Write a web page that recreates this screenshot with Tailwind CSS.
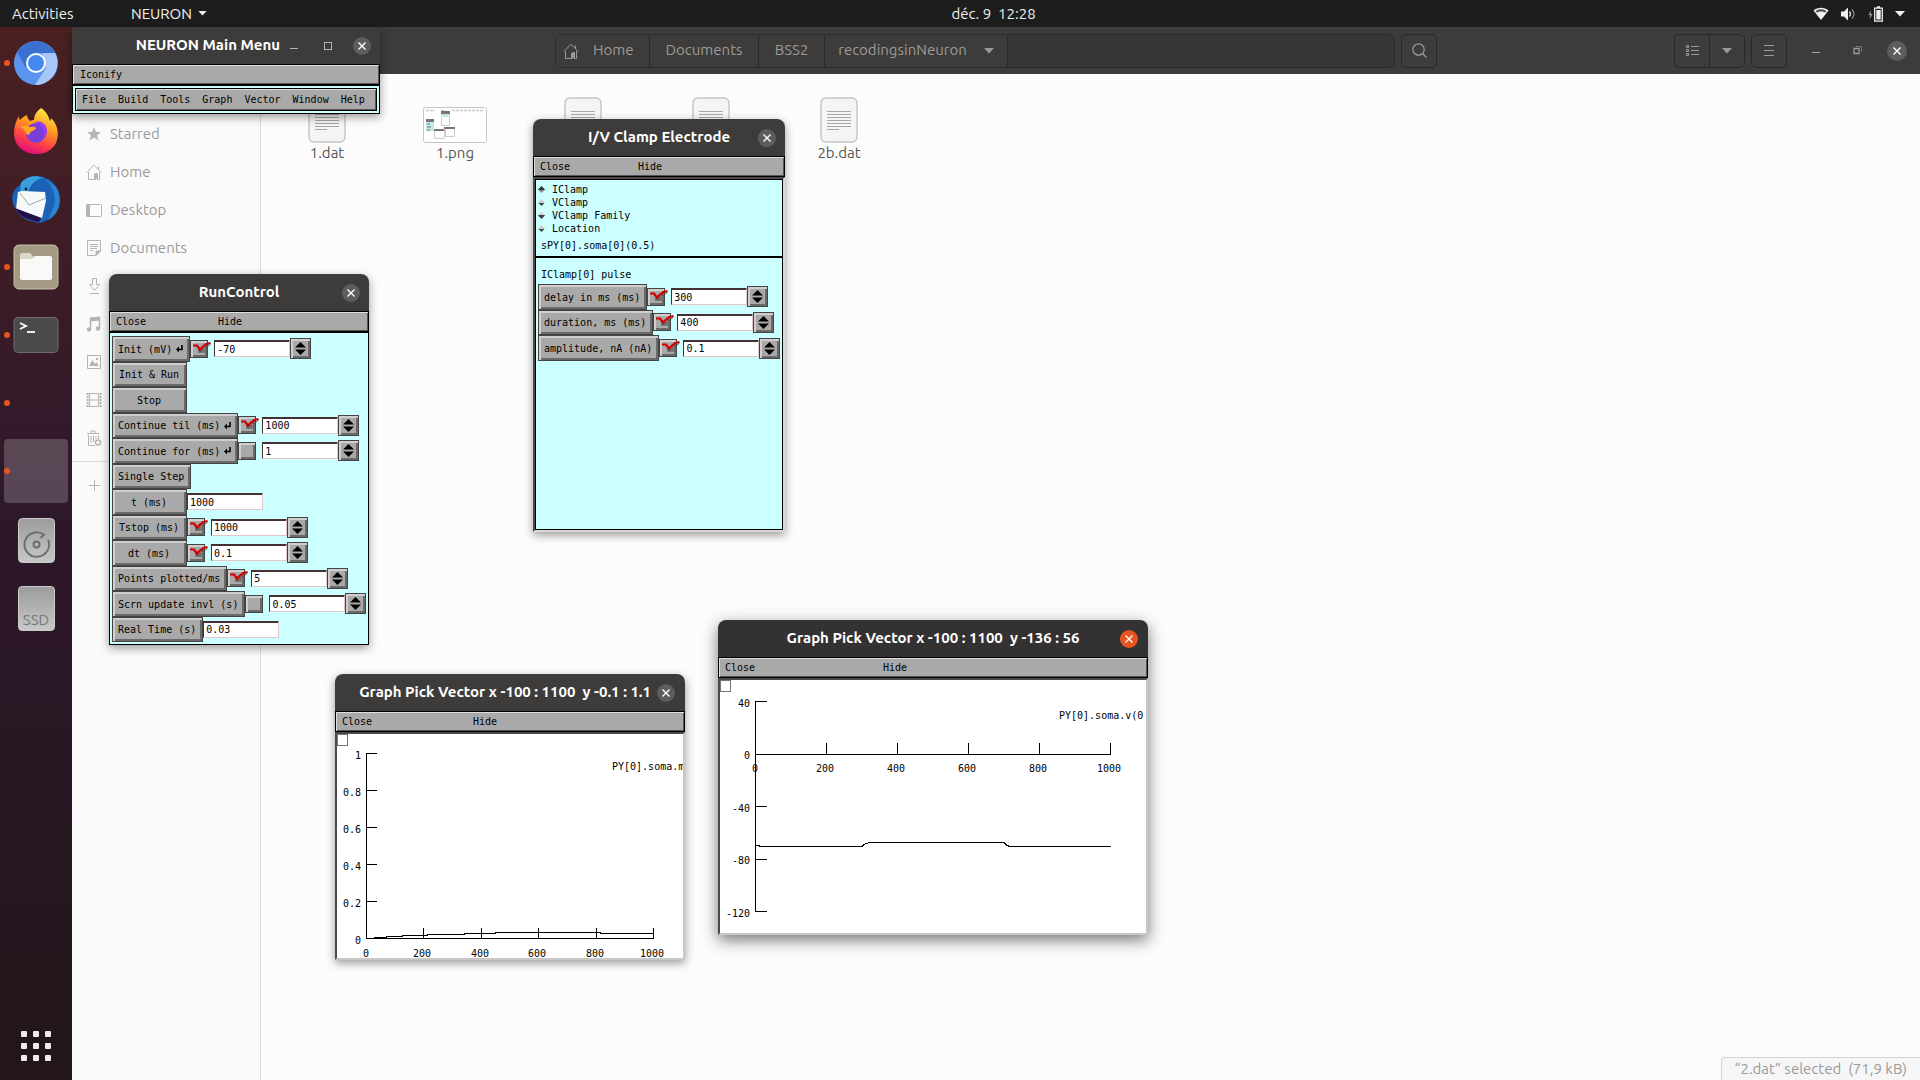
<!DOCTYPE html>
<html lang="fr">
<head>
<meta charset="utf-8">
<title>NEURON</title>
<script src="https://cdn.jsdelivr.net/npm/@tailwindcss/browser@4"></script>
</head>
<body class="relative flex h-screen min-h-[1000px] flex-col overflow-hidden bg-[#fcfcfc] font-['Ubuntu','Noto_Sans',sans-serif] text-[15px] text-[#9a9a9a]">

<svg class="hidden" aria-hidden="true">
  <symbol id="x" viewBox="0 0 10 10"><path d="M1.5 1.5l7 7M8.5 1.5l-7 7" stroke="currentColor" stroke-width="1.4" fill="none"/></symbol>
  <symbol id="tri" viewBox="0 0 10 6"><path d="M0 0h10L5 5.5z" fill="currentColor"/></symbol>
  <symbol id="house" viewBox="0 0 16 16"><path d="M.8 8.5L8 1.2l7.2 7.3M12.5 5.500V2.500M2.500 8v7.500h7V9.500h2v6h2V8" stroke="currentColor" fill="none"/><path d="M8 10h3v5H8z" fill="currentColor"/></symbol>
  <symbol id="doc" viewBox="0 0 38 46"><rect x="1" y="1" width="36" height="44" rx="5" fill="#f5f5f5" stroke="#c4c4c4" stroke-width="1.400"/><path d="M7 14.500h24M7 17.500h24M7 20.500h24M7 23.500h24M7 26.500h24M7 29.500h24M7 32.500h12" stroke="#a6a6a6"/></symbol>
  <symbol id="tick" viewBox="0 0 18 14"><path d="M5 8h7v4H5z" fill="#777"/><path d="M5 6.500l2.500 4.500 4-4.500h2l4-3.500" stroke="#555" stroke-width="1" fill="none"/><path d="M0 4.500h4L7 8.500l3-3L13.500 3l4-1" stroke="#d00000" stroke-width="2.200" fill="none"/></symbol>
  <symbol id="ret" viewBox="0 0 7 8"><path d="M6 0v4.500H2" stroke="#000" stroke-width="1.600" fill="none"/><path d="M0 4.500l3-3v6z" fill="#000"/></symbol>
  <symbol id="updown" viewBox="0 0 11 13"><path d="M5.500 0L11 5.500H0zM5.500 13L0 7.500h11z" fill="#000"/></symbol>
</svg>

<!-- Top panel -->
<header class="flex h-[27px] shrink-0 items-center bg-[#1d1d1d] pl-3 pr-[15px] text-[#f0f0f0]">
  <div class="flex flex-1 items-center">
    <button class="w-[119px] text-left leading-5">Activities</button>
    <button class="flex items-center gap-[6px] leading-5">NEURON <svg class="h-[5px] w-[9px]"><use href="#tri"/></svg></button>
  </div>
  <button class="pl-[70px] leading-5 whitespace-pre">déc. 9  12:28</button>
  <div class="flex flex-1 items-center justify-end gap-3">
    <svg class="h-[14px] w-[16px]" viewBox="0 0 16 14"><path d="M.5 3.500C4.500-.2 11.500-.2 15.500 3.500L8 13z" fill="#f0f0f0"/><path d="M2.500 4.200C5.500 1.600 10.500 1.600 13.500 4.200L12 5.600C9.500 4 6.500 4 4 5.600z" fill="#555"/></svg>
    <svg class="h-[14px] w-[15px]" viewBox="0 0 15 14"><path d="M0 4.500h3L7 .5v13L3 9.500H0z" fill="#f0f0f0"/><path d="M8.500 4.500q2 2.500 0 5" stroke="#ddd" stroke-width="1.300" fill="none"/><path d="M11 2.500q4 4.500 0 9" stroke="#888" stroke-width="1.300" fill="none"/></svg>
    <svg class="h-[16px] w-[15px]" viewBox="0 0 15 16"><path d="M3 4.500L.5 9h1.700l-.5 4L4.500 8H2.800z" fill="#999"/><path d="M6.700 2.200h7.600v13H6.700zM9 1h3" stroke="#f0f0f0" stroke-width="1.300" fill="none"/><path d="M8.300 4h4.400v9.500H8.300z" fill="#f0f0f0"/></svg>
    <svg class="h-[6px] w-[10px]"><use href="#tri"/></svg>
  </div>
</header>

<div class="flex min-h-0 flex-1">
  <!-- Dock -->
  <nav aria-label="Dock" class="flex w-[72px] shrink-0 flex-col justify-between bg-linear-to-b from-[#4b2021] via-[#2e182b] via-45% to-[#22161a] pb-[19px] pt-[2px]">
    <ul>
      <li class="relative flex h-[68px] items-center justify-center"><i class="absolute left-1 size-[6px] rounded-full bg-[#e95420]"></i>
        <svg class="size-[44px]" viewBox="0 0 44 44"><circle cx="22" cy="22" r="22" fill="#5b94ef"/><path d="M3 11A22 22 0 0 1 41 12H22L12 27z" fill="#3b6fd0"/><path d="M41 12A22 22 0 0 1 21 44l11-17-4-15z" fill="#a9c6f8"/><circle cx="22" cy="22" r="10" fill="#fff"/><circle cx="22" cy="22" r="8" fill="#4688f1"/></svg></li>
      <li class="relative flex h-[68px] items-center justify-center">
        <svg class="size-[46px]" viewBox="0 0 46 46"><defs><linearGradient id="ff" x1=".75" y1="0" x2=".35" y2="1"><stop offset="0" stop-color="#fff14a"/><stop offset=".4" stop-color="#ff9a20"/><stop offset=".72" stop-color="#ff3f46"/><stop offset="1" stop-color="#dc0b80"/></linearGradient></defs><path d="M28 0c7 5 8 10 9 13 1-1 1-2 1-3 8 8 8 18 5 25-4 8-12 11-20 11C10 46 1 37 1 25c0-7 2-12 5-17 0 2 0 3 1 4 2-2 4-4 7-5 0 2 1 4 3 6 2-1 3-1 4-1 0-5 3-9 7-12z" fill="url(#ff)"/><circle cx="23" cy="25" r="10" fill="#7a3fdb"/><path d="M22 14c7-2 12 3 12 9 0 4-2 7-4 8 3-8-1-14-8-17z" fill="#9a3cf5"/><path d="M7 19c4-2 7-1 10 0 3 0 5-1 6 1 0 2-5 3-6 5-1 3-3 2-4 0-1-3-3-5-6-6z" fill="#ffa51f"/></svg></li>
      <li class="relative flex h-[68px] items-center justify-center">
        <svg class="size-[48px]" viewBox="0 0 48 48"><path d="M24 1c14 0 24 11 24 23 0 10-7 17-10 20l-9 4C12 47 2 38 0 24c0-6 4-12 8-14 4-6 9-9 16-9z" fill="#1c62b7"/><path d="M9 8C13 2 24-1 31 3c-7 1-12 6-14 12-2 3-5 5-7 6l-2-4z" fill="#3a9fe0"/><path d="M33 5c9 6 11 17 9 26l-6 14c11-6 13-16 11-26-2-8-8-12-14-14z" fill="#2a85d2"/><path d="M10 16l23 1 1 9-4 17L4 34l2-17z" fill="#f7f8fa"/><path d="M8 18l9 12 17-7" stroke="#9aa" fill="none"/><path d="M3 33l26 10-2 4C15 45 7 41 3 33z" fill="#231048"/><circle cx="14" cy="14" r="1.400" fill="#123"/></svg></li>
      <li class="relative flex h-[68px] items-center justify-center"><i class="absolute left-1 size-[6px] rounded-full bg-[#e95420]"></i>
        <svg class="size-[46px]" viewBox="0 0 46 46"><rect x="1" y="1" width="44" height="44" rx="5" fill="#a29a82" stroke="#c7c1ad"/><path d="M7 11q0-2 2-2h8l4 4h16q2 0 2 2v3H7z" fill="#dcd8c9"/><path d="M7 15h12l3-3h15q2 0 2 2v20q0 2-2 2H9q-2 0-2-2z" fill="#faf9f7"/></svg></li>
      <li class="relative flex h-[68px] items-center justify-center"><i class="absolute left-1 size-[6px] rounded-full bg-[#e95420]"></i>
        <svg class="h-[36px] w-[46px]" viewBox="0 0 46 36"><rect x="1" y=".5" width="44" height="35" rx="4" fill="#4a4a4a" stroke="#6c6c6c"/><path d="M7 6l6 3-6 3" stroke="#fff" stroke-width="1.800" fill="none"/><path d="M14 15h8" stroke="#fff" stroke-width="1.800"/></svg></li>
      <li class="relative flex h-[68px] items-center"><i class="absolute left-1 size-[6px] rounded-full bg-[#e95420]"></i></li>
      <li class="relative flex h-[68px] items-center justify-center"><i class="absolute left-1 size-[6px] rounded-full bg-[#e95420]"></i><span class="size-16 rounded bg-white/20"></span></li>
      <li class="flex h-[68px] items-center justify-center pt-[2px]">
        <svg class="h-[45px] w-[37px]" viewBox="0 0 37 45"><defs><linearGradient id="dk" x2="0" y2="1"><stop offset="0" stop-color="#9c9c9c"/><stop offset="1" stop-color="#c8c8c8"/></linearGradient></defs><rect x=".5" y=".5" width="36" height="44" rx="4" fill="url(#dk)" stroke="#ccc"/><path d="M27 18.500a12 12 0 1 0 2.500 3l-4-.5 2.500-2.500" stroke="none" fill="none"/><path d="M30 21.500A12.300 12.300 0 1 1 26 16.600L22.500 20" stroke="#6e6e6e" stroke-width="2" fill="none"/><circle cx="18.500" cy="26.500" r="3" stroke="#6e6e6e" stroke-width="2" fill="none"/></svg></li>
      <li class="flex h-[68px] items-center justify-center pt-[2px]"><span class="flex h-[45px] w-[37px] items-end justify-center rounded border border-[#ccc] bg-linear-to-b from-[#9c9c9c] to-[#c8c8c8] text-[15px] leading-5 text-[#777]">SSD</span></li>
    </ul>
    <button aria-label="Show applications" class="mx-auto grid w-[30px] grid-cols-3 gap-[6px]">
      <i class="size-[6px] rounded-[1px] bg-[#f0eeec]"></i><i class="size-[6px] rounded-[1px] bg-[#f0eeec]"></i><i class="size-[6px] rounded-[1px] bg-[#f0eeec]"></i>
      <i class="size-[6px] rounded-[1px] bg-[#f0eeec]"></i><i class="size-[6px] rounded-[1px] bg-[#f0eeec]"></i><i class="size-[6px] rounded-[1px] bg-[#f0eeec]"></i>
      <i class="size-[6px] rounded-[1px] bg-[#f0eeec]"></i><i class="size-[6px] rounded-[1px] bg-[#f0eeec]"></i><i class="size-[6px] rounded-[1px] bg-[#f0eeec]"></i>
    </button>
  </nav>

  <!-- File manager -->
  <section class="flex min-w-0 flex-1 flex-col">
    <div class="flex h-[47px] shrink-0 items-center bg-[#3e3c3a] pl-[483px] pr-[13px] text-[#9c9a98]">
      <div class="flex h-[34px] w-[840px] items-stretch rounded-[5px] border border-[#2e2c2b] bg-[#393735]">
        <button class="flex w-[94px] items-center gap-[14px] border-r border-[#2a2827] bg-[#3e3c3a] pl-[7px]"><svg class="size-4"><use href="#house"/></svg>Home</button>
        <button class="w-[109px] border-r border-[#2a2827] bg-[#3e3c3a]">Documents</button>
        <button class="w-[66px] border-r border-[#2a2827] bg-[#3e3c3a]">BSS2</button>
        <button class="flex w-[183px] items-center justify-center gap-[17px] border-r border-[#2a2827] bg-[#3e3c3a]">recodingsinNeuron <svg class="h-[6px] w-[10px]"><use href="#tri"/></svg></button>
      </div>
      <button aria-label="Search" class="ml-[6px] flex h-[34px] w-[36px] items-center justify-center rounded-[5px] border border-[#2a2827]"><svg class="size-[15px]" viewBox="0 0 15 15" fill="none" stroke="currentColor" stroke-width="1.200"><circle cx="6.500" cy="6.500" r="5.700"/><path d="M10.500 10.500l4 4"/></svg></button>
      <div class="flex-1"></div>
      <div class="flex h-[34px] w-[71px] rounded-[5px] border border-[#2a2827]">
        <button aria-label="List view" class="flex flex-1 items-center justify-center border-r border-[#2a2827]"><svg class="h-[12px] w-[13px]" viewBox="0 0 13 12" fill="none" stroke="currentColor"><path d="M5 1.500h8M5 5.500h8M5 9.500h8M.5.5h2v2h-2zM.5 4.500h2v2h-2zM.5 8.500h2v2h-2z"/></svg></button>
        <button aria-label="View options" class="flex flex-1 items-center justify-center"><svg class="h-[6px] w-[10px]"><use href="#tri"/></svg></button>
      </div>
      <button aria-label="Menu" class="ml-[6px] flex h-[34px] w-[36px] items-center justify-center rounded-[5px] border border-[#2a2827]"><svg class="h-[11px] w-[10px]" viewBox="0 0 10 11" stroke="currentColor"><path d="M0 .5h10M0 5.500h10M0 10.500h10"/></svg></button>
      <button aria-label="Minimize" class="ml-[25px] flex h-5 w-[10px] items-center pt-1"><i class="h-px w-2 bg-[#a8a6a4]"></i></button>
      <button aria-label="Restore" class="ml-[30px] flex w-[10px] justify-center"><svg class="size-[9px]" viewBox="0 0 9 9" fill="none" stroke="currentColor"><path d="M1 2.500h5v5H1z" stroke-width="1.300"/><path d="M3 .5h5.500V6" opacity=".6"/></svg></button>
      <button aria-label="Close" class="ml-[25px] flex size-5 items-center justify-center rounded-full bg-[#5f5d5c] text-white"><svg class="size-[10px]"><use href="#x"/></svg></button>
    </div>
    <div class="flex min-h-0 flex-1">
      <aside class="w-[189px] shrink-0 border-r border-[#dcdcdc] bg-[#fafafa] pt-[41px]">
        <ul>
          <li><a href="#" class="flex h-[38px] items-center gap-2 pl-[14px]"><svg class="size-4" viewBox="0 0 16 16"><path d="M8 1l2 5h5l-4 3.400 1.500 5L8 11.500l-4.500 2.900 1.500-5L1 6h5z" fill="#b4b4b4"/></svg>Starred</a></li>
          <li><a href="#" class="flex h-[38px] items-center gap-2 pl-[14px]"><svg class="size-4 text-[#b4b4b4]"><use href="#house"/></svg>Home</a></li>
          <li><a href="#" class="flex h-[38px] items-center gap-2 pl-[14px]"><svg class="size-4" viewBox="0 0 16 16"><rect x=".5" y="2.500" width="15" height="12" rx="1" fill="none" stroke="#b4b4b4"/><path d="M0 2.500h4v12H0z" fill="#b4b4b4"/></svg>Desktop</a></li>
          <li><a href="#" class="flex h-[38px] items-center gap-2 pl-[14px]"><svg class="size-4" viewBox="0 0 16 16" fill="none" stroke="#b4b4b4"><path d="M1.500.5h13V11L10 15.500H1.500zM4 4.500h8M4 6.500h8M4 8.500h7M4 10.500h3"/><path d="M10 15.500V11h4.500z" fill="#b4b4b4"/></svg>Documents</a></li>
          <li><a href="#" aria-label="Downloads" class="flex h-[38px] items-center pl-[14px]"><svg class="size-4" viewBox="0 0 16 16" fill="none" stroke="#b4b4b4"><path d="M6.500.5h4v6h3l-5 6-5-6h3zM4 15.500h9"/></svg></a></li>
          <li><a href="#" aria-label="Music" class="flex h-[38px] items-center pl-[14px]"><svg class="size-4" viewBox="0 0 16 16"><path d="M4.500 13V2.500l9-1V12" stroke="#b4b4b4" stroke-width="1.500" fill="none"/><path d="M4 1.500l10-1v4l-10 1z" fill="#b4b4b4"/><circle cx="3" cy="13.500" r="2.200" fill="#b4b4b4"/><circle cx="12" cy="12.500" r="2.200" fill="#b4b4b4"/></svg></a></li>
          <li><a href="#" aria-label="Pictures" class="flex h-[38px] items-center pl-[14px]"><svg class="size-4" viewBox="0 0 16 16"><path d="M1.500 1.500h13v13h-13z" stroke="#b4b4b4" fill="none"/><path d="M3 12l3.500-6L9 10l1.500-2 2.500 4z" fill="#b4b4b4"/><circle cx="11" cy="5" r="1.300" fill="#b4b4b4"/></svg></a></li>
          <li><a href="#" aria-label="Videos" class="flex h-[38px] items-center pl-[14px]"><svg class="size-4" viewBox="0 0 16 16" fill="none" stroke="#b4b4b4"><path d="M3.500 1.500h9v13h-9zM3.500 8h9"/><path d="M1.500 1v14M14.500 1v14" stroke-width="2" stroke-dasharray="2 1"/></svg></a></li>
          <li><a href="#" aria-label="Trash" class="flex h-[38px] items-center pl-[14px]"><svg class="size-4" viewBox="0 0 16 16" fill="none" stroke="#b4b4b4"><path d="M1 3.500h12M5 3V1h4v2M2.500 5v10.500H9M12.500 5v4M5 6v7M7.500 6v6M10 6v3"/><circle cx="12" cy="12.500" r="2.500" stroke-width="1.500"/></svg></a></li>
        </ul>
        <div class="mt-1 border-t border-[#dcdcdc] pt-1"><a href="#" aria-label="Other locations" class="flex h-[38px] items-center pl-[17px]"><svg class="size-[11px]" viewBox="0 0 11 11"><path d="M5.500 0v11M0 5.500h11" stroke="#b4b4b4"/></svg></a></div>
      </aside>
      <div class="flex min-w-0 flex-1 flex-col justify-between">
        <ul class="flex pl-[2px] pt-[23px] text-center leading-5 text-[#555]">
          <li class="flex w-32 flex-col items-center"><svg class="h-[46px] w-[38px]"><use href="#doc"/></svg><span>1.dat</span></li>
          <li class="flex w-32 flex-col items-center"><svg class="mt-[10px] h-[36px] w-[64px]" viewBox="0 0 64 36"><rect x=".5" y=".5" width="63" height="35" rx="2" fill="#fff" stroke="#c6c6c6"/><path d="M3 3.500h9M18 3.500h5M29 3.500h31" stroke="#c8c8d0" stroke-dasharray="3 1" stroke-width="1.500"/><path d="M18.500 4.500h8v14h-8zM11.500 22.500h10v9h-10zM22.500 20.500h9v9h-9z" fill="#fdfdfd" stroke="#ccc"/><path d="M18 4h9v3h-9zM3 12h8v3H3zM11 22h10v2H11zM21 20h11v2H21z" fill="#777"/><path d="M18 7h9v3h-9zM3 15h8v9H3z" fill="#bfeaea"/><path d="M4 17h3M4 20h4M4 23h3" stroke="#777"/></svg><span>1.png</span></li>
          <li class="flex w-32 flex-col items-center"><svg class="h-[46px] w-[38px]"><use href="#doc"/></svg></li>
          <li class="flex w-32 flex-col items-center"><svg class="h-[46px] w-[38px]"><use href="#doc"/></svg></li>
          <li class="flex w-32 flex-col items-center"><svg class="h-[46px] w-[38px]"><use href="#doc"/></svg><span>2b.dat</span></li>
        </ul>
        <p class="self-end whitespace-pre rounded-tl border-l border-t border-[#d4d4d4] bg-[#f6f6f6] pl-3 pr-[13px] leading-[22px]">“2.dat” selected  (71,9 kB)</p>
      </div>
    </div>
  </section>
</div>

<!-- Main menu -->
<section class="absolute left-[72px] top-[27px] w-[308px] rounded-t-lg shadow-[0_3px_10px_#00000066]">
  <div class="grid h-[37px] grid-cols-[1fr_auto_1fr] items-center rounded-t-lg bg-[#3e3c3a] text-white">
    <i></i>
    <h2 class="font-bold whitespace-pre">NEURON Main Menu</h2>
    <div class="flex items-center justify-end pl-[10px] pr-[9px]">
      <button aria-label="Minimize" class="flex h-4 items-end pb-[5px]"><i class="h-px w-2 bg-[#b8b6b4]"></i></button>
      <button aria-label="Maximize" class="ml-[26px] size-2 border border-[#b8b6b4]"></button>
      <button aria-label="Close" class="ml-[21px] flex size-[18px] items-center justify-center rounded-full bg-[#5f5d5c]"><svg class="size-[10px]"><use href="#x"/></svg></button>
    </div>
  </div>
  <div class="border border-black bg-[#a9a9a9] pt-px font-['DejaVu_Sans_Mono',monospace] text-[10px] text-black shadow-[inset_1px_1px_#ddd,inset_-1px_-1px_#555]"><button class="block px-[7px] leading-[18px]">Iconify</button></div>
  <div class="border border-black bg-[#ccffff] p-[2px]">
    <div class="flex gap-3 border border-black bg-[#a9a9a9] pl-[6px] pt-px font-['DejaVu_Sans_Mono',monospace] text-[10px] leading-[20px] text-black shadow-[inset_1px_1px_#ddd,inset_-1px_-1px_#555]">
      <button>File</button><button>Build</button><button>Tools</button><button>Graph</button><button>Vector</button><button>Window</button><button>Help</button>
    </div>
  </div>
</section>

<!-- Run control -->
<section class="absolute left-[109px] top-[274px] w-[260px] rounded-t-lg shadow-[0_3px_10px_#00000066]">
  <div class="grid h-[37px] grid-cols-[1fr_auto_1fr] items-center rounded-t-lg bg-[#3e3c3a] text-white">
    <i></i><h2 class="font-bold">RunControl</h2>
    <button aria-label="Close" class="mr-[9px] flex size-[18px] items-center justify-center justify-self-end rounded-full bg-[#5f5d5c]"><svg class="size-[10px]"><use href="#x"/></svg></button>
  </div>
  <div class="flex border border-black bg-[#a9a9a9] pl-[6px] pt-px font-['DejaVu_Sans_Mono',monospace] text-[10px] leading-[18px] text-black shadow-[inset_1px_1px_#ddd,inset_-1px_-1px_#555]"><button class="w-[102px] text-left">Close</button><button>Hide</button></div>
  <div class="border border-black bg-[#ccffff] px-[2px] pb-[2px] pt-[3px]"><div id="run" class="grid h-[306px] auto-rows-fr"></div></div>
</section>

<!-- Clamp electrode -->
<section class="absolute left-[533px] top-[119px] w-[252px] rounded-t-lg shadow-[0_3px_10px_#00000066]">
  <div class="grid h-[37px] grid-cols-[1fr_auto_1fr] items-center rounded-t-lg bg-[#3e3c3a] text-white">
    <i></i><h2 class="font-bold">I/V Clamp Electrode</h2>
    <button aria-label="Close" class="mr-[9px] flex size-[18px] items-center justify-center justify-self-end rounded-full bg-[#5f5d5c]"><svg class="size-[10px]"><use href="#x"/></svg></button>
  </div>
  <div class="flex border border-black bg-[#a9a9a9] pl-[6px] pt-px font-['DejaVu_Sans_Mono',monospace] text-[10px] leading-[18px] text-black shadow-[inset_1px_1px_#ddd,inset_-1px_-1px_#555]"><button class="w-[98px] text-left">Close</button><button>Hide</button></div>
  <div class="border-2 border-b-[#d8d8d8] border-l-[#4a4a4a] border-r-[#d8d8d8] border-t-[#4a4a4a] bg-[#ccffff]">
    <div class="border border-black font-['DejaVu_Sans_Mono',monospace] text-[10px] text-black">
      <div id="modes" class="flex h-[78px] flex-col border-b-2 border-black pl-[2px] pt-[3px]"></div>
      <div class="h-[271px] pl-[2px] pt-[8px]">
        <p class="pl-[3px] leading-[18px]">IClamp[0] pulse</p>
        <div id="pulse" class="grid h-[77px] auto-rows-fr"></div>
      </div>
    </div>
  </div>
</section>

<!-- Graph, current -->
<section class="absolute left-[335px] top-[674px] w-[350px] rounded-t-lg shadow-[0_3px_10px_#00000066]">
  <div class="grid h-[37px] grid-cols-[1fr_auto_1fr] items-center rounded-t-lg bg-[#3e3c3a] text-white">
    <i></i><h2 class="font-bold whitespace-pre">Graph Pick Vector x -100 : 1100  y -0.1 : 1.1</h2>
    <button aria-label="Close" class="ml-[6px] mr-[10px] flex size-[18px] items-center justify-center justify-self-end rounded-full bg-[#5f5d5c]"><svg class="size-[10px]"><use href="#x"/></svg></button>
  </div>
  <div class="flex border border-black bg-[#a9a9a9] pl-[6px] pt-px font-['DejaVu_Sans_Mono',monospace] text-[10px] leading-[18px] text-black shadow-[inset_1px_1px_#ddd,inset_-1px_-1px_#555]"><button class="w-[131px] text-left">Close</button><button>Hide</button></div>
  <div class="border-2 border-b-[#c8c8c8] border-l-[#4a4a4a] border-r-[#c8c8c8] border-t-[#4a4a4a] bg-white">
    <svg id="g1" class="block h-[224px] w-full font-['DejaVu_Sans_Mono',monospace] text-[10px]" viewBox="337 734 346 224" shape-rendering="crispEdges" fill="none" stroke="#000">
      <path d="M337.500 734.500h10v11h-10z" stroke="#777"/>
      <path d="M377 753.500H366.500V938.500H653.500M366 790.500h11M366 827.500h11M366 864.500h11M366 901.500h11M423.500 928v10M481.500 928v10M538.500 928v10M596.500 928v10M653.500 928v10"/>
      <path d="M374 937.500h12v-1h16v-1h25v-1h37v-1h31v-1h105v1h53"/>
    </svg>
  </div>
</section>

<!-- Graph, voltage -->
<section class="absolute left-[718px] top-[620px] w-[430px] rounded-t-lg shadow-[0_5px_16px_#00000088]">
  <div class="grid h-[37px] grid-cols-[1fr_auto_1fr] items-center rounded-t-lg bg-[#333132] text-white">
    <i></i><h2 class="font-bold whitespace-pre">Graph Pick Vector x -100 : 1100  y -136 : 56</h2>
    <button aria-label="Close" class="mr-[10px] flex size-[18px] items-center justify-center justify-self-end rounded-full bg-[#e95420]"><svg class="size-[10px]"><use href="#x"/></svg></button>
  </div>
  <div class="flex border border-black bg-[#a9a9a9] pl-[6px] pt-px font-['DejaVu_Sans_Mono',monospace] text-[10px] leading-[18px] text-black shadow-[inset_1px_1px_#ddd,inset_-1px_-1px_#555]"><button class="w-[158px] text-left">Close</button><button>Hide</button></div>
  <div class="border-2 border-b-[#c8c8c8] border-l-[#4a4a4a] border-r-[#c8c8c8] border-t-[#4a4a4a] bg-white">
    <svg id="g2" class="block h-[253px] w-full font-['DejaVu_Sans_Mono',monospace] text-[10px]" viewBox="720 680 426 253" shape-rendering="crispEdges" fill="none" stroke="#000">
      <path d="M720.500 680.500h10v11h-10z" stroke="#777"/>
      <path d="M767 701.500H755.500V911.500H767M755 754.500H1110.500M755 806.500h12M755 859.500h12M826.500 743v11M897.500 743v11M968.500 743v11M1039.500 743v11M1110.500 743v11"/>
      <path d="M756 845.500h3v1h103l2-2 5-2h135l3 3 3 1h101"/>
    </svg>
  </div>
</section>

<script>
// One control line: a button, an optional tick box, a value box and a stepper.
function row(label, o) {
  const name = label.replace('&', '&amp;');
  let h = '<div class="flex items-center font-[\'DejaVu_Sans_Mono\',monospace] text-[10px] text-black">' +
    '<button class="flex h-full min-w-[75px] items-center justify-center gap-1 border border-[#444] bg-[#a9a9a9] pl-[5px] pr-[6px] pt-px whitespace-pre shadow-[inset_2px_2px_#cfcfcf,inset_-2px_-2px_#6a6a6a]">' + name +
    (o.ret ? '<svg class="h-2 w-[7px]"><use href="#ret"/></svg>' : '') + '</button>';
  if (o.check !== undefined) h += '<label class="relative mr-[6px] size-[18px] shrink-0"><input type="checkbox" aria-label="Use ' + name + '"' + (o.check ? ' checked' : '') +
    ' class="peer block size-full appearance-none border border-[#444] bg-[#a9a9a9] shadow-[inset_2px_2px_#cfcfcf,inset_-2px_-2px_#6a6a6a]"><svg class="absolute left-[3px] top-[1px] hidden h-[14px] w-[18px] peer-checked:block"><use href="#tick"/></svg></label>';
  if (o.value !== undefined) h += '<input type="text" aria-label="' + name + '" value="' + o.value +
    '" class="h-[17px] w-[76px] shrink-0 border border-b-[#e0c8c8] border-l-[#443030] border-r-[#e0c8c8] border-t-[#443030] bg-white pl-[2px] pt-px shadow-[inset_0_1px_#443030]">';
  if (o.check !== undefined) h += '<button aria-label="Step ' + name + '" class="flex h-[21px] w-[21px] shrink-0 items-center justify-center border border-[#444] bg-[#a9a9a9] shadow-[inset_2px_2px_#cfcfcf,inset_-2px_-2px_#6a6a6a]"><svg class="h-[13px] w-[11px]"><use href="#updown"/></svg></button>';
  return h + '</div>';
}
document.getElementById('run').innerHTML = [
  row('Init (mV)', {ret: 1, check: true, value: '-70'}),
  row('Init & Run', {}),
  row('Stop', {}),
  row('Continue til (ms)', {ret: 1, check: true, value: '1000'}),
  row('Continue for (ms)', {ret: 1, check: false, value: '1'}),
  row('Single Step', {}),
  row('t (ms)', {value: '1000'}),
  row('Tstop (ms)', {check: true, value: '1000'}),
  row('dt (ms)', {check: true, value: '0.1'}),
  row('Points plotted/ms', {check: true, value: '5'}),
  row('Scrn update invl (s)', {check: false, value: '0.05'}),
  row('Real Time (s)', {value: '0.03'})
].join('');
document.getElementById('pulse').innerHTML = [
  row('delay in ms (ms)', {check: true, value: '300'}),
  row('duration, ms (ms)', {check: true, value: '400'}),
  row('amplitude, nA (nA)', {check: true, value: '0.1'})
].join('');
document.getElementById('modes').innerHTML = ['IClamp', 'VClamp', 'VClamp Family', 'Location'].map((t, i) =>
  '<label class="flex h-[13px] items-center gap-[7px]"><input type="radio" name="mode"' + (i ? '' : ' checked') +
  ' class="size-[7px] appearance-none bg-linear-to-b from-[#ccc] from-50% to-[#444] to-50% [clip-path:polygon(50%_0,100%_50%,50%_100%,0_50%)] checked:from-[#333] checked:to-[#888]">' + t + '</label>').join('') +
  '<p class="pl-[3px] pt-[3px] leading-[16px]">sPY[0].soma[0](0.5)</p>';

// Axis labels: [x, y, text, anchor]
function labels(id, items) {
  document.getElementById(id).insertAdjacentHTML('beforeend', items.map(([x, y, t, a]) =>
    '<text x="' + x + '" y="' + y + '" text-anchor="' + a + '" fill="#000" stroke="none">' + t + '</text>').join(''));
}
labels('g1', [[361,759,'1','end'],[361,796,'0.8','end'],[361,833,'0.6','end'],[361,870,'0.4','end'],[361,907,'0.2','end'],[361,944,'0','end'],
  [366,957,'0','middle'],[422,957,'200','middle'],[480,957,'400','middle'],[537,957,'600','middle'],[595,957,'800','middle'],[652,957,'1000','middle'],[612,770,'PY[0].soma.m','start']]);
labels('g2', [[750,707,'40','end'],[750,759,'0','end'],[750,812,'-40','end'],[750,864,'-80','end'],[750,917,'-120','end'],
  [755,772,'0','middle'],[825,772,'200','middle'],[896,772,'400','middle'],[967,772,'600','middle'],[1038,772,'800','middle'],[1109,772,'1000','middle'],[1059,719,'PY[0].soma.v(0','start']]);
</script>
</body>
</html>
